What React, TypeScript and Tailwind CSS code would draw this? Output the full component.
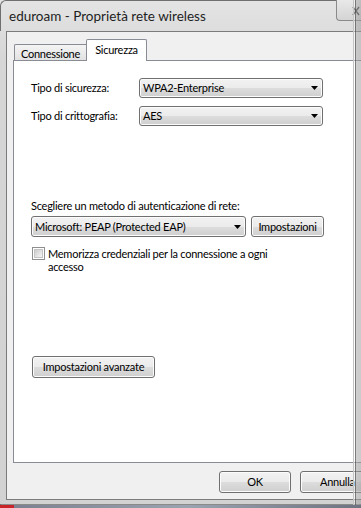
import React from "react";

const btn =
  "flex items-center justify-center rounded-[3px] border border-[#707070] bg-[linear-gradient(#f2f2f2,#ebebeb_50%,#dddddd_50%,#cfcfcf)] shadow-[inset_0_0_0_1px_#fcfcfc]";

function Arrow() {
  return (
    <svg width="7" height="4" viewBox="0 0 7 4">
      <polygon points="0,0 7,0 3.5,4" fill="#000" />
    </svg>
  );
}

function Combo({ text, className }: { text: string; className: string }) {
  return (
    <div
      className={`flex items-center justify-between rounded-[3px] border border-[#707070] bg-[linear-gradient(#f2f2f2,#ebebeb_50%,#dddddd_50%,#cfcfcf)] pl-[3px] pr-[4px] shadow-[inset_0_0_0_1px_#fcfcfc] ${className}`}
    >
      <span>{text}</span>
      <Arrow />
    </div>
  );
}

export default function App() {
  return (
    <div className="relative h-[508px] w-[361px] overflow-hidden bg-[linear-gradient(#e4e4e4,#d6d6d6_60px,#d2d2d2)] font-['Segoe_UI',Lato,sans-serif] text-[11px] leading-[14px] tracking-[-0.25px] text-black">
      {/* title bar */}
      <div className="flex h-[31px] items-center rounded-tl-[6px] border-l border-t border-[#6f6f6f] pl-[8px]">
        <span className="text-[13.5px] tracking-normal text-[#1e1e1e]">eduroam - Proprietà rete wireless</span>
      </div>

      {/* close button */}
      <div className="absolute left-[336px] top-0 h-[21px] w-[40px] rounded-bl-[4px] border-b border-l border-[#8a8a8a] bg-[linear-gradient(#e8e8e8,#d4d4d4)]">
        <svg className="absolute left-[15px] top-[6px]" width="8" height="10" viewBox="0 0 8 10">
          <path d="M1 1 L7 9 M7 1 L1 9" stroke="#3a3a3a" strokeWidth="1.4" />
        </svg>
      </div>

      {/* client area */}
      <div className="ml-[6px] h-[469px] w-[372px] border border-[#7b7b7b] bg-[#f0f0f0] pl-[6px] pt-[7px]">
        <div className="flex h-[21px] items-end pl-[1px]">
          <div className="flex h-[16px] w-[72px] items-center justify-center rounded-tl-[2px] border-l border-t border-[#898c95] bg-[linear-gradient(#f4f4f4,#e2e2e2)] pt-[2px]">
            Connessione
          </div>
          <div className="relative z-10 -mb-px flex h-[22px] w-[61px] items-start justify-center rounded-t-[2px] border-l border-r border-t border-[#898c95] bg-white pt-[3px]">
            Sicurezza
          </div>
        </div>

        <div className="h-[403px] w-[362px] border border-[#898c95] bg-white pl-[17px]">
          <div className="mt-[17px] flex items-center">
            <span className="w-[108px]">Tipo di sicurezza:</span>
            <Combo text="WPA2-Enterprise" className="h-[20px] w-[184px]" />
          </div>
          <div className="mt-[8px] flex items-center">
            <span className="w-[108px]">Tipo di crittografia:</span>
            <Combo text="AES" className="h-[20px] w-[184px]" />
          </div>

          <div className="mt-[73px]">Scegliere un metodo di autenticazione di rete:</div>
          <div className="mt-[3px] flex gap-[5px]">
            <Combo text="Microsoft: PEAP (Protected EAP)" className="h-[21px] w-[215px]" />
            <div className={`${btn} h-[21px] w-[73px]`}>Impostazioni</div>
          </div>

          <div className="mt-[10px] flex items-start gap-[3px] pl-[1px]">
            <div className="flex h-[13px] w-[13px] items-center justify-center border border-[#8e8f8f] bg-white">
              <div className="h-[9px] w-[9px] border border-[#c4c4c4] bg-[linear-gradient(135deg,#cbcbcb,#f6f6f6)]" />
            </div>
            <div className="leading-[13px]">
              Memorizza credenziali per la connessione a ogni
              <br />
              accesso
            </div>
          </div>

          <div className={`${btn} ml-[1px] mt-[83px] h-[22px] w-[123px]`}>Impostazioni avanzate</div>
        </div>

        <div className="mt-[8px] flex gap-[9px] pl-[206px]">
          <div className={`${btn} h-[22px] w-[72px]`}>OK</div>
          <div className="flex h-[22px] w-[73px] items-center rounded-[3px] border border-[#707070] bg-[linear-gradient(#f2f2f2,#ebebeb_50%,#dddddd_50%,#cfcfcf)] pl-[19px] shadow-[inset_0_0_0_1px_#fcfcfc]">
            Annulla
          </div>
        </div>
      </div>

      {/* bottom edge and desktop strip */}
      <div className="mt-[4px] h-[1px] border-l border-[#6f6f6f] bg-[#8a8a8a]" />
      <div className="flex h-[3px]">
        <div className="w-[14px] bg-[#c8242a]" />
        <div className="flex-1 bg-[linear-gradient(90deg,#7b8190,#9aa3b0,#6d7380)]" />
      </div>

      {/* right edge shadow */}
      <div className="absolute right-0 top-0 h-[505px] w-[8px] border-l border-[#c4c4c4] bg-[linear-gradient(90deg,rgba(255,255,255,0.4)_1px,rgba(90,90,90,0.8)_1px,rgba(90,90,90,0.8)_2px,rgba(170,170,170,0.55)_2px,rgba(150,150,150,0.5))]" />
    </div>
  );
}
